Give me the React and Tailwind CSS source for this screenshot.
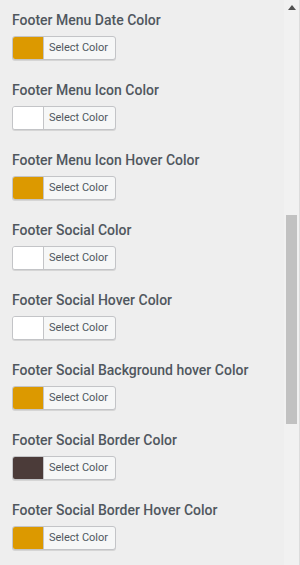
import React from "react";

const fields = [
  { label: "Footer Menu Date Color", color: "#dc9900" },
  { label: "Footer Menu Icon Color", color: "#ffffff" },
  { label: "Footer Menu Icon Hover Color", color: "#dc9900" },
  { label: "Footer Social Color", color: "#ffffff" },
  { label: "Footer Social Hover Color", color: "#ffffff" },
  { label: "Footer Social Background hover Color", color: "#dc9900" },
  { label: "Footer Social Border Color", color: "#4b3b39" },
  { label: "Footer Social Border Hover Color", color: "#dc9900" },
];

function ColorField({ label, color }) {
  return (
    <div className="flex flex-col items-start pb-5">
      <span className="text-[14px] leading-5 font-medium text-[#50575e] whitespace-nowrap">
        {label}
      </span>
      <button
        type="button"
        className="mt-1.5 flex h-6 w-[104px] items-stretch overflow-hidden rounded-[3px] border border-[#c3c4c7] bg-[#f6f7f7] shadow-[0_1px_0_#d5d5d5]"
      >
        <span className="w-[31px] border-r border-[#c3c4c7]" style={{ backgroundColor: color }} />
        <span className="flex flex-1 items-center justify-center pr-0.5 text-[11px] text-[#50575e]">
          Select Color
        </span>
      </button>
    </div>
  );
}

export default function App() {
  return (
    <div className="flex h-[565px] w-[300px] overflow-hidden bg-[#eeeeee] font-['Roboto','Liberation_Sans',sans-serif]">
      <div className="flex-1 pl-3 pt-2.5">
        {fields.map((f) => (
          <ColorField key={f.label} {...f} />
        ))}
      </div>
      <div className="flex w-[16px] flex-col border-r border-[#dcdcdc] bg-[#f1f1f1]">
        <div className="flex h-[15px] items-center justify-center">
          <svg width="8" height="5" viewBox="0 0 8 5">
            <path d="M0 5 L4 0 L8 5 Z" fill="#505050" />
          </svg>
        </div>
        <div className="mt-[200px] ml-[2px] h-[209px] w-[11px] bg-[#c1c1c1]" />
      </div>
    </div>
  );
}
